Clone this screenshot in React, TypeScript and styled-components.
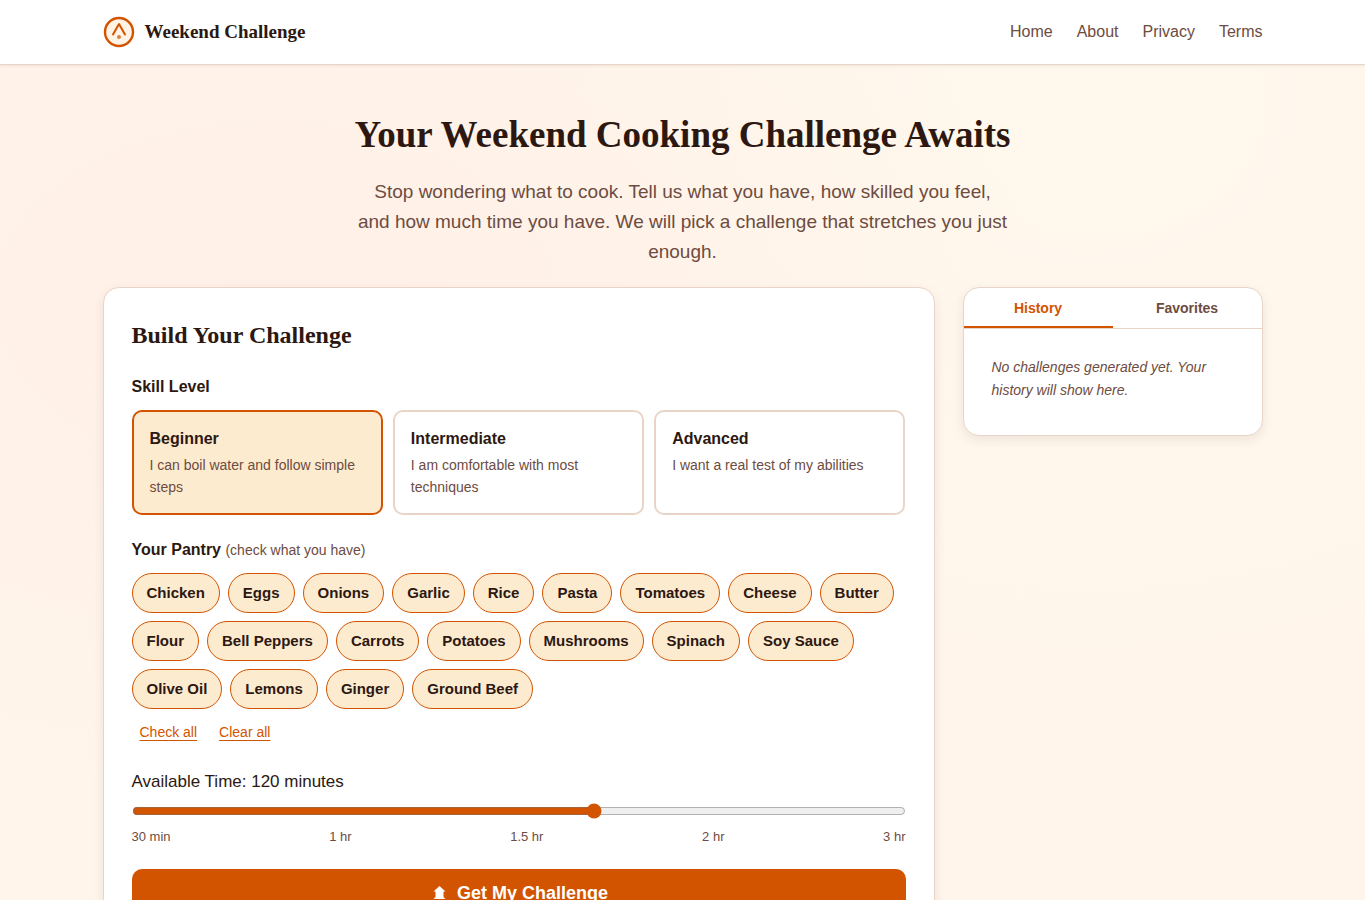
import React, { useState } from "react";
import styled, { createGlobalStyle } from "styled-components";

const accent = "#d35400";
const ink = "#2c1810";
const muted = "#6d4c41";
const line = "#e8d5c8";
const serif = '"Liberation Serif", Georgia, serif';
const sans = '"Liberation Sans", Arial, sans-serif';

const GlobalStyle = createGlobalStyle`
  *, *::before, *::after { box-sizing: border-box; }
  body {
    margin: 0;
    min-height: 100vh;
    font: 17px/27px ${sans};
    color: ${ink};
    background:
      radial-gradient(ellipse at 20% 30%, #fff0e7 0%, transparent 50%),
      radial-gradient(ellipse at 80% 10%, #fff8ed 0%, transparent 50%),
      #fff5eb;
  }
  h1, h2, h3, p { margin: 0; }
  button, input { font-family: inherit; }
`;

const Header = styled.header`
  background: #fff;
  border-bottom: 1px solid ${line};
  box-shadow: 0 1px 3px rgba(44, 24, 16, 0.08);
`;

const Container = styled.div`
  max-width: 1200px;
  margin: 0 auto;
  padding: 0 20px;
`;

const HeaderRow = styled(Container)`
  display: flex;
  align-items: center;
  justify-content: space-between;
  height: 64px;
`;

const Brand = styled.a`
  display: flex;
  align-items: center;
  gap: 10px;
  font: bold 19px/30px ${serif};
  color: ${ink};
  text-decoration: none;
`;

const Nav = styled.nav`
  display: flex;
  gap: 24px;
  line-height: 26px;
`;

const NavLink = styled.a`
  font-size: 16px;
  color: ${muted};
  text-decoration: none;
`;

const Hero = styled.section`
  padding: 47px 0 20px;
  text-align: center;
`;

const HeroTitle = styled.h1`
  margin-bottom: 19px;
  font: bold 37px/46px ${serif};
`;

const HeroText = styled.p`
  max-width: 652px;
  margin: 0 auto;
  font-size: 19px;
  line-height: 30px;
  color: ${muted};
`;

const Columns = styled.main`
  display: grid;
  grid-template-columns: minmax(0, 1fr) 300px;
  align-items: start;
  gap: 28px;
  padding-bottom: 48px;
`;

const Card = styled.section`
  background: #fff;
  border: 1px solid ${line};
  border-radius: 16px;
  box-shadow: 0 4px 12px rgba(44, 24, 16, 0.08);
  overflow: hidden;
`;

const FormCard = styled(Card)`
  padding: 28px;
`;

const CardTitle = styled.h2`
  margin-bottom: 19px;
  font: bold 24px/38px ${serif};
`;

const Group = styled.fieldset`
  min-width: 0;
  margin: 0 0 21px;
  padding: 0;
  border: 0;
`;

const Legend = styled.legend`
  padding: 0 0 10px;
  font-size: 16px;
  font-weight: bold;
`;

const Hint = styled.span`
  font-size: 14px;
  line-height: 20px;
  font-weight: normal;
  color: ${muted};
`;

const SkillGrid = styled.div`
  display: grid;
  grid-template-columns: repeat(3, 1fr);
  gap: 10px;
`;

const HiddenInput = styled.input`
  position: absolute;
  opacity: 0;
  width: 1px;
  height: 1px;
  margin: 0;
`;

const SkillOption = styled.label<{ $selected: boolean }>`
  position: relative;
  padding: 14px 16px 15px;
  border: 2px solid ${(p) => (p.$selected ? accent : line)};
  border-radius: 10px;
  background: ${(p) => (p.$selected ? "#fdebd0" : "#fff")};
  cursor: pointer;
`;

const SkillName = styled.span`
  display: block;
  margin-bottom: 3px;
  font-size: 16px;
  line-height: 25px;
  font-weight: bold;
`;

const SkillText = styled.span`
  display: block;
  font-size: 14px;
  line-height: 22px;
  color: ${muted};
`;

const Chips = styled.div`
  display: flex;
  flex-wrap: wrap;
  gap: 8px;
`;

const Chip = styled.label<{ $selected: boolean }>`
  position: relative;
  padding: 7px 14px;
  border: 1px solid ${(p) => (p.$selected ? accent : line)};
  border-radius: 20px;
  background: ${(p) => (p.$selected ? "#fdebd0" : "#fff")};
  font-size: 15px;
  line-height: 24px;
  font-weight: ${(p) => (p.$selected ? "bold" : "normal")};
  cursor: pointer;
`;

const ChipActions = styled.div`
  display: flex;
  gap: 6px;
  margin-top: 9px;
`;

const TextButton = styled.button`
  padding: 4px 8px 5px;
  border: 0;
  background: none;
  font-size: 14px;
  line-height: 20px;
  color: ${accent};
  text-decoration: underline;
  text-underline-offset: 3px;
  cursor: pointer;
`;

const TimeLabel = styled.label`
  display: block;
  margin-bottom: 8px;
`;

const Slider = styled.input`
  display: block;
  width: 100%;
  margin: 0;
  accent-color: ${accent};
`;

const Ticks = styled.div`
  display: flex;
  justify-content: space-between;
  margin: 8px 0 22px;
  font-size: 13px;
  line-height: 20px;
  color: ${muted};
`;

const SubmitButton = styled.button`
  display: flex;
  align-items: center;
  justify-content: center;
  gap: 10px;
  width: 100%;
  padding: 10px 24px;
  border: 0;
  border-radius: 10px;
  background: ${accent};
  color: #fff;
  font-size: 18px;
  line-height: 28px;
  font-weight: bold;
  cursor: pointer;
`;

const Tabs = styled.div`
  display: flex;
  border-bottom: 1px solid ${line};
`;

const Tab = styled.button<{ $active: boolean }>`
  flex: 1;
  padding: 11px 8px 8px;
  border: 0;
  border-bottom: 2px solid ${(p) => (p.$active ? accent : "transparent")};
  background: none;
  font-size: 14px;
  line-height: 19px;
  font-weight: bold;
  color: ${(p) => (p.$active ? accent : muted)};
  cursor: pointer;
`;

const Panel = styled.div`
  padding: 27px 28px 33px;
`;

const EmptyText = styled.p`
  font-size: 14px;
  line-height: 23px;
  font-style: italic;
  color: ${muted};
`;

const skills = [
  { name: "Beginner", text: "I can boil water and follow simple steps" },
  { name: "Intermediate", text: "I am comfortable with most techniques" },
  { name: "Advanced", text: "I want a real test of my abilities" },
];

const pantry = [
  "Chicken", "Eggs", "Onions", "Garlic", "Rice", "Pasta", "Tomatoes", "Cheese", "Butter",
  "Flour", "Bell Peppers", "Carrots", "Potatoes", "Mushrooms", "Spinach", "Soy Sauce",
  "Olive Oil", "Lemons", "Ginger", "Ground Beef",
];

const Logo = () => (
  <svg width="32" height="32" viewBox="0 0 32 32" fill="none" aria-hidden="true">
    <circle cx="16" cy="16" r="14" fill="#fff3e6" stroke={accent} strokeWidth="2.4" />
    <path d="M10 18.5 L16 8 L22 18.5" stroke={accent} strokeWidth="2" strokeLinecap="round" strokeLinejoin="round" />
    <circle cx="16" cy="21" r="2" fill="#e08040" />
  </svg>
);

const ArrowIcon = () => (
  <svg width="18" height="18" viewBox="0 0 18 18" fill="#fff" aria-hidden="true">
    <path d="M10.5 2 L16.5 7.5 H14.5 V13 L16.5 15 H4.5 L6.5 13 V7.5 H4.5 Z" />
  </svg>
);

export default function App() {
  const [skill, setSkill] = useState("Beginner");
  const [items, setItems] = useState<string[]>(pantry);
  const [minutes, setMinutes] = useState(120);
  const [tab, setTab] = useState("History");

  const toggle = (item: string) =>
    setItems((prev) => (prev.includes(item) ? prev.filter((i) => i !== item) : [...prev, item]));

  return (
    <>
      <GlobalStyle />
      <Header>
        <HeaderRow>
          <Brand href="#">
            <Logo />
            Weekend Challenge
          </Brand>
          <Nav>
            {["Home", "About", "Privacy", "Terms"].map((name) => (
              <NavLink key={name} href="#">{name}</NavLink>
            ))}
          </Nav>
        </HeaderRow>
      </Header>
      <Container>
        <Hero>
          <HeroTitle>Your Weekend Cooking Challenge Awaits</HeroTitle>
          <HeroText>
            Stop wondering what to cook. Tell us what you have, how skilled you feel, and how much
            time you have. We will pick a challenge that stretches you just enough.
          </HeroText>
        </Hero>
        <Columns>
          <FormCard>
            <CardTitle>Build Your Challenge</CardTitle>
            <Group>
              <Legend>Skill Level</Legend>
              <SkillGrid>
                {skills.map((s) => (
                  <SkillOption key={s.name} $selected={skill === s.name}>
                    <HiddenInput
                      type="radio"
                      name="skill"
                      checked={skill === s.name}
                      onChange={() => setSkill(s.name)}
                    />
                    <SkillName>{s.name}</SkillName>
                    <SkillText>{s.text}</SkillText>
                  </SkillOption>
                ))}
              </SkillGrid>
            </Group>
            <Group>
              <Legend>
                Your Pantry <Hint>(check what you have)</Hint>
              </Legend>
              <Chips>
                {pantry.map((item) => (
                  <Chip key={item} $selected={items.includes(item)}>
                    <HiddenInput
                      type="checkbox"
                      checked={items.includes(item)}
                      onChange={() => toggle(item)}
                    />
                    {item}
                  </Chip>
                ))}
              </Chips>
              <ChipActions>
                <TextButton type="button" onClick={() => setItems(pantry)}>Check all</TextButton>
                <TextButton type="button" onClick={() => setItems([])}>Clear all</TextButton>
              </ChipActions>
            </Group>
            <TimeLabel htmlFor="time">{`Available Time: ${minutes} minutes`}</TimeLabel>
            <Slider
              id="time"
              type="range"
              min={30}
              max={180}
              step={15}
              value={minutes}
              onChange={(e) => setMinutes(Number(e.target.value))}
            />
            <Ticks>
              {["30 min", "1 hr", "1.5 hr", "2 hr", "3 hr"].map((t) => (
                <span key={t}>{t}</span>
              ))}
            </Ticks>
            <SubmitButton type="button">
              <ArrowIcon />
              Get My Challenge
            </SubmitButton>
          </FormCard>
          <Card>
            <Tabs role="tablist">
              {["History", "Favorites"].map((name) => (
                <Tab
                  key={name}
                  type="button"
                  role="tab"
                  aria-selected={tab === name}
                  $active={tab === name}
                  onClick={() => setTab(name)}
                >
                  {name}
                </Tab>
              ))}
            </Tabs>
            <Panel role="tabpanel">
              <EmptyText>
                {tab === "History"
                  ? "No challenges generated yet. Your history will show here."
                  : "No favorites saved yet."}
              </EmptyText>
            </Panel>
          </Card>
        </Columns>
      </Container>
    </>
  );
}
